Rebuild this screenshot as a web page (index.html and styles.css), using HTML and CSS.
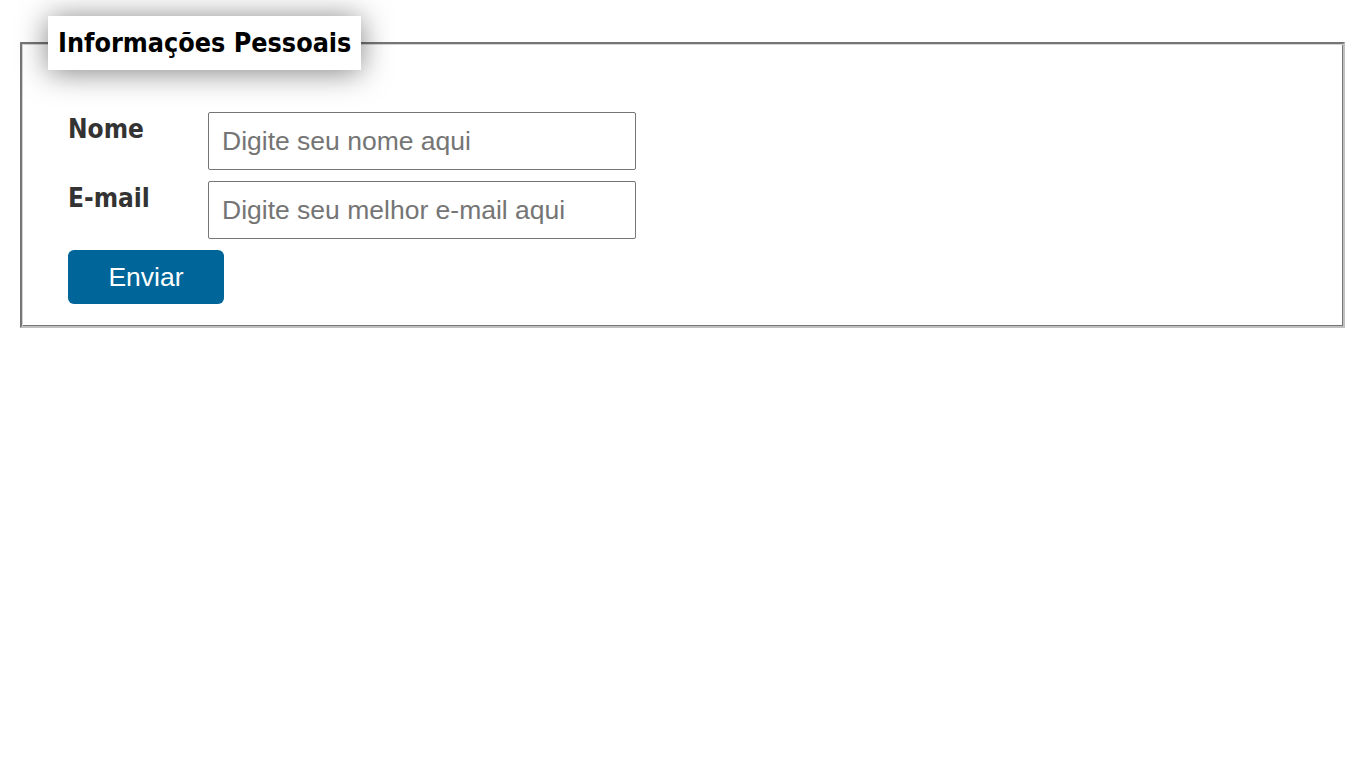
FILE: index.html
```html
<!DOCTYPE html>
<html lang="pt-BR">
<head>
<meta charset="utf-8">
<title>Formulário</title>
<link rel="stylesheet" href="styles.css">
</head>
<body>
<form class="form">
  <fieldset class="box">
    <legend class="box-title">Informações Pessoais</legend>
    <div class="row">
      <label class="label" for="nome">Nome</label>
      <input class="field" id="nome" type="text" placeholder="Digite seu nome aqui">
    </div>
    <div class="row">
      <label class="label" for="email">E-mail</label>
      <input class="field" id="email" type="email" placeholder="Digite seu melhor e-mail aqui">
    </div>
    <button class="btn" type="button">Enviar</button>
  </fieldset>
</form>
</body>
</html>
```
FILE: styles.css
```css
html, body {
  margin: 0;
  padding: 0;
  background: #fff;
}
.form {
  padding: 16px 21px 0 20px;
}
.box {
  margin: 0;
  border: 2px solid;
  border-color: #767676 #c0c0c0 #c0c0c0 #767676;
  box-shadow: inset 1px 1px 0 #d4d4d4, inset -1px -1px 0 #767676;
  padding: 42px 46px 22px 46px;
  display: flex;
  flex-direction: column;
  align-items: flex-start;
}
.box-title {
  margin-left: -20px;
  padding: 0 10px;
  height: 54px;
  line-height: 54px;
  background: #fff;
  box-shadow: 0 2px 30px rgba(0, 0, 0, 0.5);
  font-family: "DejaVu Sans Condensed", "DejaVu Sans", sans-serif;
  font-weight: bold;
  font-size: 26.7px;
  color: #000;
}
.row {
  display: flex;
  align-items: flex-start;
  margin-bottom: 11px;
}
.label {
  width: 140px;
  padding-top: 2px;
  font-family: "DejaVu Sans Condensed", "DejaVu Sans", sans-serif;
  font-weight: bold;
  font-size: 26px;
  color: #333;
}
.field {
  box-sizing: border-box;
  width: 428px;
  height: 58px;
  margin: 0;
  padding: 0 13px;
  border: 1px solid #767676;
  border-radius: 2px;
  font-family: "Liberation Sans", Arial, sans-serif;
  font-size: 26.5px;
  color: #333;
}
.field::placeholder {
  color: #757575;
}
.btn {
  width: 156px;
  height: 54px;
  margin: 0;
  border: none;
  border-radius: 6px;
  background: #006699;
  color: #fff;
  font-family: "Liberation Sans", Arial, sans-serif;
  font-size: 26.5px;
  cursor: pointer;
}
```
